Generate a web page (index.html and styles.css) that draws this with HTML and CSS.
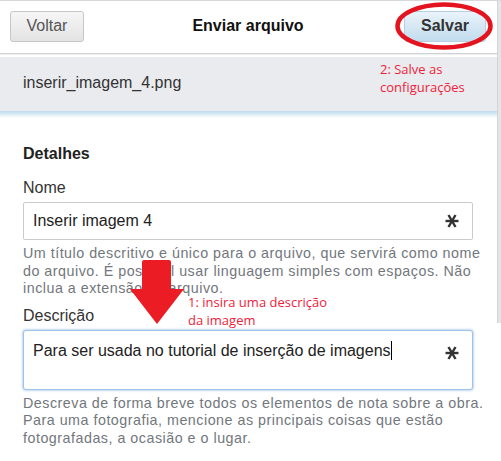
FILE: index.html
```html
<!DOCTYPE html>
<html lang="pt">
<head>
<meta charset="utf-8">
<title>Enviar arquivo</title>
<link rel="stylesheet" href="styles.css">
</head>
<body>
<div class="page">
  <div class="panel">
    <header class="topbar">
      <button class="btn btn-back">Voltar</button>
      <h1 class="title">Enviar arquivo</h1>
      <div class="save-wrap">
        <button class="btn btn-save">Salvar</button>
        <svg class="ring" width="100" height="50" viewBox="0 0 100 50"><ellipse cx="50" cy="25" rx="46.5" ry="21.5" fill="none" stroke="#e3141f" stroke-width="4.5"/></svg>
      </div>
    </header>
    <section class="filebar">
      <span class="filename">inserir_imagem_4.png</span>
      <span class="note note-save">2: Salve as<br>configurações</span>
    </section>
    <div class="progress"></div>
    <main class="details">
      <h2 class="section-title">Detalhes</h2>
      <label class="label">Nome</label>
      <div class="field">
        <span class="value">Inserir imagem 4</span>
        <svg class="req" width="14" height="14" viewBox="0 0 14 14"><g stroke="#333" stroke-width="2.4" stroke-linecap="butt"><line x1="0.5" y1="7" x2="13.5" y2="7"/><line x1="3.5" y1="1" x2="10.5" y2="13"/><line x1="10.5" y1="1" x2="3.5" y2="13"/></g></svg>
      </div>
      <p class="help">Um título descritivo e único para o arquivo, que servirá como nome do arquivo. É possível usar linguagem simples com espaços. Não inclua a extensão do arquivo.</p>
      <div class="desc-wrap">
        <label class="label">Descrição</label>
        <svg class="arrow" width="58" height="66" viewBox="0 0 58 66"><path d="M14 3 Q14 1 16 1 L41 1 Q43 1 43 3 L43 30 L56 30 L29 65 L2 30 L14 30 Z" fill="#ec1c24"/></svg>
        <span class="note note-desc">1: insira uma descrição<br>da imagem</span>
      </div>
      <div class="field field-area">
        <span class="value">Para ser usada no tutorial de inserção de imagens<span class="caret"></span></span>
        <svg class="req" width="14" height="14" viewBox="0 0 14 14"><g stroke="#333" stroke-width="2.4" stroke-linecap="butt"><line x1="0.5" y1="7" x2="13.5" y2="7"/><line x1="3.5" y1="1" x2="10.5" y2="13"/><line x1="10.5" y1="1" x2="3.5" y2="13"/></g></svg>
      </div>
      <p class="help">Descreva de forma breve todos os elementos de nota sobre a obra. Para uma fotografia, mencione as principais coisas que estão fotografadas, a ocasião e o lugar.</p>
    </main>
  </div>
  <div class="edge"></div>
</div>
</body>
</html>
```

FILE: styles.css
```css
* { box-sizing: border-box; }
html, body { margin: 0; padding: 0; background: #fff; }
body {
  font-family: "Liberation Sans", Arial, sans-serif;
  color: #222;
  width: 501px;
  height: 461px;
  overflow: hidden;
}
.page {
  display: flex;
  align-items: flex-start;
  border-top: 1px solid #d6d8dc;
}
.panel {
  flex: 1;
  min-width: 0;
}
.edge {
  width: 4px;
  height: 322px;
  background: #e4e5e7;
  border-left: 1px solid #d2d4d7;
}
.topbar {
  height: 53px;
  display: flex;
  align-items: center;
  justify-content: space-between;
  padding: 0 11px 2px 10px;
  border-bottom: 1px solid #cfd1d4;
  box-shadow: 0 1px 1px rgba(0,0,0,0.06);
}
.btn {
  height: 31px;
  font-family: "Liberation Sans", Arial, sans-serif;
  font-size: 16px;
  border-radius: 3px;
  padding: 0;
  cursor: pointer;
}
.btn-back {
  width: 74px;
  color: #555;
  background: linear-gradient(#f6f6f6, #e3e3e3);
  border: 1px solid #c6c6c6;
}
.title {
  margin: 0;
  font-size: 16px;
  font-weight: bold;
  color: #111;
  padding-left: 8px;
}
.save-wrap {
  position: relative;
  width: 82px;
  height: 31px;
}
.btn-save {
  width: 82px;
  font-weight: bold;
  color: #333;
  background: linear-gradient(#eaf3fa, #c2dcee);
  border: 1px solid #b6cfe2;
}
.ring {
  position: absolute;
  left: -10px;
  top: -10px;
}
.filebar {
  position: relative;
  margin-top: 3px;
  height: 54px;
  background: #eaebef;
  display: flex;
  align-items: center;
  padding: 0 23px 2px;
}
.filename {
  font-size: 16px;
  color: #333;
}
.note {
  position: absolute;
  font-family: "Open Sans", "Noto Sans", sans-serif;
  font-size: 13px;
  line-height: 18px;
  color: #ee1d3b;
}
.note-save {
  left: 380px;
  top: 3px;
}
.progress {
  height: 7px;
  background: linear-gradient(#bcdcef, #ffffff);
}
.details {
  padding: 26px 24px 0 23px;
}
.section-title {
  margin: 0;
  font-size: 16px;
  line-height: 20px;
  font-weight: bold;
  color: #222;
}
.label {
  display: block;
  font-size: 16px;
  line-height: 20px;
  color: #333;
  margin-top: 14px;
}
.field {
  margin-top: 4px;
  height: 38px;
  border: 1px solid #cbcbcb;
  border-radius: 2px;
  display: flex;
  align-items: center;
  justify-content: space-between;
  padding: 0 13px 0 9px;
  background: #fff;
}
.value {
  font-size: 16px;
  color: #222;
}
.field-area {
  height: 60px;
  align-items: flex-start;
  padding-top: 10px;
  border: 1px solid #9fc3e6;
  box-shadow: 0 0 2px 1px rgba(120,170,220,0.45);
  border-radius: 3px;
}
.field-area .req { margin-top: 5px; }
.caret {
  display: inline-block;
  width: 1px;
  height: 19px;
  background: #000;
  vertical-align: -4px;
}
.help {
  margin: 5px -20px 0 0;
  font-size: 14.3px;
  letter-spacing: 0.5px;
  line-height: 17.5px;
  color: #72777d;
}
.desc-wrap {
  position: relative;
  margin-top: -6px;
}
.desc-wrap .label { margin-top: 14px; }
.arrow {
  position: absolute;
  left: 105px;
  top: -47px;
}
.note-desc {
  left: 165px;
  top: -13px;
}
```
